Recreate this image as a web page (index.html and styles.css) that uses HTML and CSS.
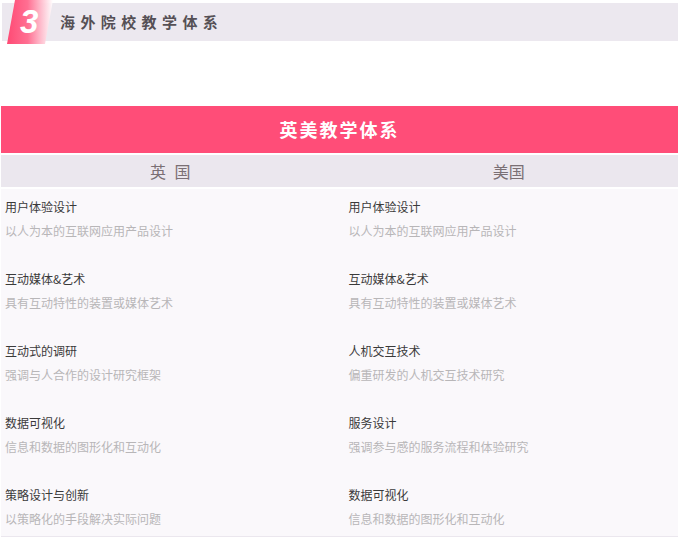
FILE: index.html
```html
<!DOCTYPE html>
<html lang="zh">
<head>
<meta charset="utf-8">
<title>海外院校教学体系</title>
<link rel="stylesheet" href="styles.css">
</head>
<body>
<div class="section-head">
  <div class="badge">
    <svg width="50" height="44" viewBox="0 0 50 44">
      <defs>
        <linearGradient id="g" x1="0" y1="0" x2="1" y2="0">
          <stop offset="0" stop-color="#ff4a74"/>
          <stop offset="0.45" stop-color="#ff6f92"/>
          <stop offset="1" stop-color="#ffffff" stop-opacity="0.9"/>
        </linearGradient>
      </defs>
      <polygon points="10,0 48,0 40,44 2,44" fill="url(#g)"/>
    </svg>
    <span class="badge-num">3</span>
  </div>
  <h2 class="section-title">海外院校教学体系</h2>
</div>

<div class="system">
  <div class="system-banner">英美教学体系</div>
  <div class="system-cols">
    <div class="col-head col-head-wide">英 国</div>
    <div class="col-head">美国</div>
  </div>
  <div class="system-body">
    <div class="col col-left">
      <div class="item"><div class="item-title">用户体验设计</div><div class="item-desc">以人为本的互联网应用产品设计</div></div>
      <div class="item"><div class="item-title">互动媒体&amp;艺术</div><div class="item-desc">具有互动特性的装置或媒体艺术</div></div>
      <div class="item"><div class="item-title">互动式的调研</div><div class="item-desc">强调与人合作的设计研究框架</div></div>
      <div class="item"><div class="item-title">数据可视化</div><div class="item-desc">信息和数据的图形化和互动化</div></div>
      <div class="item"><div class="item-title">策略设计与创新</div><div class="item-desc">以策略化的手段解决实际问题</div></div>
    </div>
    <div class="col col-right">
      <div class="item"><div class="item-title">用户体验设计</div><div class="item-desc">以人为本的互联网应用产品设计</div></div>
      <div class="item"><div class="item-title">互动媒体&amp;艺术</div><div class="item-desc">具有互动特性的装置或媒体艺术</div></div>
      <div class="item"><div class="item-title">人机交互技术</div><div class="item-desc">偏重研发的人机交互技术研究</div></div>
      <div class="item"><div class="item-title">服务设计</div><div class="item-desc">强调参与感的服务流程和体验研究</div></div>
      <div class="item"><div class="item-title">数据可视化</div><div class="item-desc">信息和数据的图形化和互动化</div></div>
    </div>
  </div>
</div>
</body>
</html>
```

FILE: styles.css
```css
* { box-sizing: border-box; }
html, body { margin: 0; padding: 0; background: #ffffff; }
body {
  font-family: "Noto Sans CJK SC", "Noto Sans", sans-serif;
  width: 679px;
}

.section-head {
  position: relative;
  margin: 3px 1px 0 2px;
  height: 38px;
  background: #ece8ef;
  display: flex;
  align-items: center;
  padding-left: 58px;
}
.badge {
  position: absolute;
  left: 3px;
  top: -3px;
  width: 50px;
  height: 44px;
}
.badge svg { display: block; }
.badge-num {
  position: absolute;
  left: 15px;
  top: 2px;
  font-family: "Liberation Sans", Arial, sans-serif;
  font-weight: bold;
  font-style: italic;
  font-size: 33px;
  line-height: 40px;
  color: #ffffff;
}
.section-title {
  margin: 0;
  font-size: 15px;
  font-weight: bold;
  letter-spacing: 5.4px;
  color: #555055;
  line-height: 20px;
}

.system {
  margin: 65px 1px 0 1px;
  width: 677px;
}
.system-banner {
  height: 47px;
  background: #ff4d78;
  color: #ffffff;
  font-size: 18px;
  font-weight: bold;
  letter-spacing: 2px;
  text-align: center;
  line-height: 47px;
}
.system-cols {
  margin-top: 2px;
  height: 32px;
  background: #ebe7ee;
  display: grid;
  grid-template-columns: 1fr 1fr;
}
.col-head {
  text-align: center;
  line-height: 32px;
  font-size: 16px;
  color: #7a6f74;
}
.col-head-wide {
  word-spacing: 5px;
}
.system-body {
  margin-top: 2px;
  background: #faf8fb;
  border-bottom: 1px solid #ebe7ee;
  display: grid;
  grid-template-columns: 1fr 1fr;
  padding: 10px 0 9px;
}
.col {
  display: flex;
  flex-direction: column;
  gap: 32px;
}
.col-left { padding-left: 4px; }
.col-right { padding-left: 9px; }
.item {
  display: flex;
  flex-direction: column;
  gap: 8px;
}
.item-title {
  font-size: 12px;
  line-height: 16px;
  color: #3a3a3a;
}
.item-desc {
  font-size: 12px;
  line-height: 16px;
  color: #b8b6b8;
}
```
